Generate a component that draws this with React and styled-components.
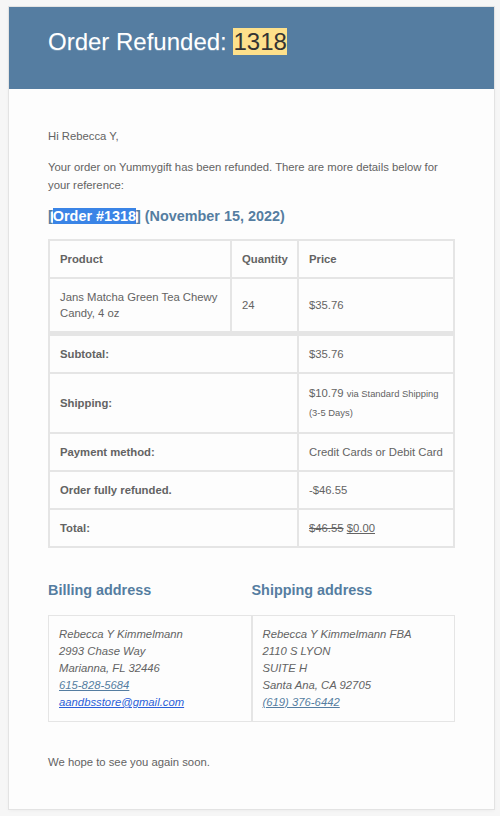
import styled, { createGlobalStyle } from 'styled-components';

const GlobalStyle = createGlobalStyle`
  body {
    margin: 0;
    background: #f6f6f6;
    font-family: "Liberation Sans", Arial, sans-serif;
  }
`;

const items = [
  { name: 'Jans Matcha Green Tea Chewy Candy, 4 oz', qty: 24, price: '$35.76' },
];

function App() {
  return (
    <Page>
      <GlobalStyle />
      <Wrapper>
        <Header>
          <Title>
            Order Refunded: <Mark>1318</Mark>
          </Title>
        </Header>

        <Body>
          <Para>Hi Rebecca Y,</Para>
          <Para>
            Your order on Yummygift has been refunded. There are more details below for
            your reference:
          </Para>

          <SectionTitle $bottom={14}>
            [<Selected>Order #1318</Selected>] (November 15, 2022)
          </SectionTitle>

          <OrderTable>
            <thead>
              <tr>
                <Cell as="th" $bold $w={182}>Product</Cell>
                <Cell as="th" $bold $w={67}>Quantity</Cell>
                <Cell as="th" $bold>Price</Cell>
              </tr>
            </thead>
            <tbody>
              {items.map((it) => (
                <tr key={it.name}>
                  <Cell>{it.name}</Cell>
                  <Cell>{it.qty}</Cell>
                  <Cell>{it.price}</Cell>
                </tr>
              ))}
            </tbody>
            <tfoot>
              <tr>
                <Cell as="th" colSpan={2} $bold $first>Subtotal:</Cell>
                <Cell $first>$35.76</Cell>
              </tr>
              <tr>
                <Cell as="th" colSpan={2} $bold>Shipping:</Cell>
                <Cell $lh={18}>
                  $10.79 <Small>via Standard Shipping (3-5 Days)</Small>
                </Cell>
              </tr>
              <tr>
                <Cell as="th" colSpan={2} $bold>Payment method:</Cell>
                <Cell>Credit Cards or Debit Card</Cell>
              </tr>
              <tr>
                <Cell as="th" colSpan={2} $bold>Order fully refunded.</Cell>
                <Cell>-$46.55</Cell>
              </tr>
              <tr>
                <Cell as="th" colSpan={2} $bold>Total:</Cell>
                <Cell>
                  <del>$46.55</del> <ins>$0.00</ins>
                </Cell>
              </tr>
            </tfoot>
          </OrderTable>

          <Addresses>
            <AddressCol>
              <SectionTitle $top={33}>Billing address</SectionTitle>
              <AddressBox>
                Rebecca Y Kimmelmann
                <br />2993 Chase Way
                <br />Marianna, FL 32446
                <br /><Link>615-828-5684</Link>
                <br /><Link $mail>aandbsstore@gmail.com</Link>
              </AddressBox>
            </AddressCol>
            <AddressCol>
              <SectionTitle $top={33}>Shipping address</SectionTitle>
              <AddressBox>
                Rebecca Y Kimmelmann FBA
                <br />2110 S LYON
                <br />SUITE H
                <br />Santa Ana, CA 92705
                <br /><Link>(619) 376-6442</Link>
              </AddressBox>
            </AddressCol>
          </Addresses>

          <Para $top={31} $bottom={0}>We hope to see you again soon.</Para>
        </Body>
      </Wrapper>
    </Page>
  );
}

export default App;

const Page = styled.div`
  padding: 7px 6px 8px 9px;
`;

const Wrapper = styled.div`
  background: #fdfdfd;
  box-shadow: 0 0 0 1px #e3e3e3, 0 1px 4px rgba(0, 0, 0, 0.06);
`;

const Header = styled.div`
  background: #557da1;
  height: 82px;
  box-sizing: border-box;
  padding: 20px 39px 0;
`;

const Title = styled.h1`
  margin: 0;
  font-size: 24px;
  font-weight: normal;
  line-height: 29px;
  color: #fff;
  text-shadow: 0 1px 0 #7797b4;
`;

const Mark = styled.span`
  background: #fde08b;
  color: #333;
  text-shadow: none;
`;

const Body = styled.div`
  padding: 38px 39px 38px;
  color: #636363;
  font-size: 11.3px;
`;

const Para = styled.p`
  margin: ${(p) => p.$top || 0}px 0 ${(p) => (p.$bottom ?? 13)}px;
  line-height: 18px;
`;

const SectionTitle = styled.h2`
  margin: ${(p) => p.$top || 0}px 0 ${(p) => (p.$bottom ?? 16)}px;
  color: #557da1;
  font-size: 14.4px;
  font-weight: bold;
  line-height: 18px;
`;

const Selected = styled.span`
  background: #3a84e6;
  color: #fff;
`;

const OrderTable = styled.table`
  width: 100%;
  border: 1px solid #e5e5e5;
  border-spacing: 0;
  table-layout: fixed;
  color: #636363;
`;

const Cell = styled.td`
  box-sizing: border-box;
  border: 1px solid #e5e5e5;
  ${(p) => p.$first && 'border-top-width: 4px;'}
  padding: 10px;
  text-align: left;
  vertical-align: middle;
  font-size: 11.3px;
  line-height: ${(p) => p.$lh || 16}px;
  font-weight: ${(p) => (p.$bold ? 'bold' : 'normal')};
  ${(p) => p.$w && `width: ${p.$w}px;`}

  del, ins {
    color: #636363;
  }
`;

const Small = styled.small`
  font-size: 9.4px;
`;

const Addresses = styled.div`
  display: grid;
  grid-template-columns: 1fr 1fr;
`;

const AddressCol = styled.div`
  display: flex;
  flex-direction: column;
`;

const AddressBox = styled.address`
  flex: 1;
  border: 1px solid #e5e5e5;
  padding: 10px;
  font-style: italic;
  line-height: 17px;
  color: #636363;
`;

const Link = styled.a`
  color: ${(p) => (p.$mail ? '#2b5fd9' : '#557da1')};
  text-decoration: underline;
`;
